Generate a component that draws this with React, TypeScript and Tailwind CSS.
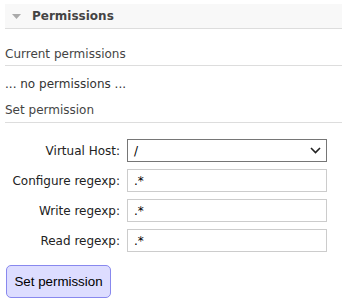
import React from "react";

const font = { fontFamily: '"DejaVu Sans", Verdana, sans-serif' };

function Field({ label, children }: { label: string; children: React.ReactNode }) {
  return (
    <div className="flex items-center">
      <label className="w-[122px] text-right text-[12px] text-[#222] pr-[7px] shrink-0">{label}</label>
      {children}
    </div>
  );
}

export default function App() {
  return (
    <div className="w-[342px] h-[307px] bg-white pt-[4px] pl-[5px] overflow-hidden" style={font}>
      <div className="h-[25px] bg-[#f8f8f8] border-b border-[#dddddd] flex items-center">
        <svg width="9" height="5" viewBox="0 0 9 5" className="ml-[7px] mt-[1px]">
          <path d="M0 0 L9 0 L4.5 5 Z" fill="#aaaaaa" />
        </svg>
        <span className="ml-[11px] text-[12px] font-bold text-[#444]">Permissions</span>
      </div>

      <div className="mt-[18px] text-[12px] leading-[15px] text-[#444] pb-[3px] border-b border-[#dddddd]">
        Current permissions
      </div>
      <div className="mt-[11px] text-[12px] leading-[15px] text-[#333]">... no permissions ...</div>
      <div className="mt-[11px] text-[12px] leading-[15px] text-[#444] pb-[4px] border-b border-[#dddddd]">
        Set permission
      </div>

      <div className="mt-[16px] flex flex-col gap-[7px]">
        <Field label="Virtual Host:">
          <div className="w-[200px] h-[23px] border border-[#767676] flex items-center justify-between pl-[6px] pr-[5px] text-[12px] text-black">
            <span>/</span>
            <svg width="11" height="7" viewBox="0 0 11 7">
              <path d="M1 1 L5.5 5.5 L10 1" fill="none" stroke="#222" strokeWidth="1.6" />
            </svg>
          </div>
        </Field>
        {["Configure regexp:", "Write regexp:", "Read regexp:"].map((l) => (
          <Field key={l} label={l}>
            <input
              readOnly
              value=".*"
              className="w-[200px] h-[23px] border border-[#cccccc] px-[6px] text-[12px] text-black outline-none"
              style={font}
            />
          </Field>
        ))}
      </div>

      <button
        className="mt-[13px] ml-[1px] w-[105px] h-[33px] rounded-[5px] border border-[#8888ee] bg-[#ddddff] text-[13.33px] text-black"
        style={{ fontFamily: '"Liberation Sans", Arial, sans-serif' }}
      >
        Set permission
      </button>
    </div>
  );
}
